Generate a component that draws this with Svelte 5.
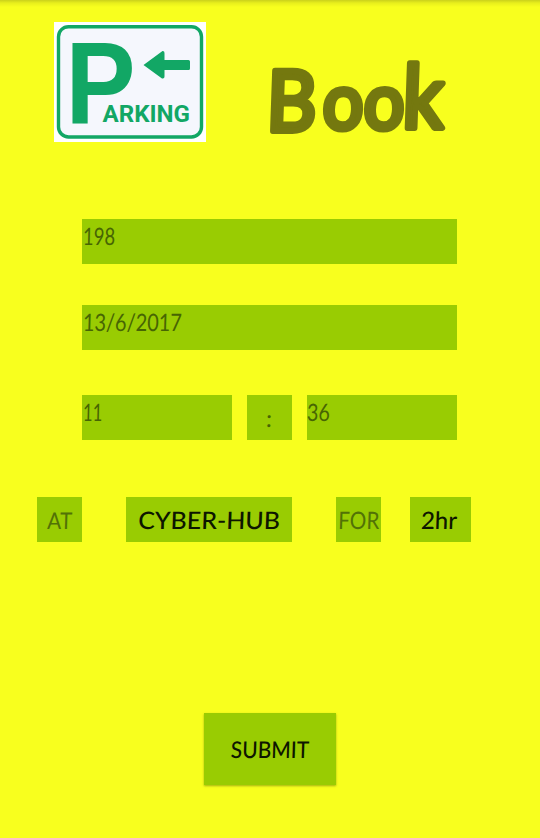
<script>
  let vehicle = '198';
  let date = '13/6/2017';
  let hour = '11';
  let minute = '36';
</script>

<main>
  <header>
    <svg class="logo" viewBox="0 0 152 120" width="152" height="120" aria-label="Parking">
      <rect width="152" height="120" fill="#fff" />
      <rect x="4.5" y="4.7" width="143" height="110.3" rx="10" fill="#f5f7fd" stroke="#12a765" stroke-width="3.4" />
      <text class="big" x="11.5" y="101" textLength="70" lengthAdjust="spacingAndGlyphs">P</text>
      <path d="M89.5 43 L108.5 29 Q110.8 28.6 110.5 31.5 V38 H134.5 Q136 38 136 39.5 V46.5 Q136 48 134.5 48 H110.5 V54.5 Q110.6 57 108 56.5 Z" fill="#12a765" />
      <text class="small" x="48.5" y="100" textLength="87.5" lengthAdjust="spacingAndGlyphs">ARKING</text>
    </svg>
    <h1>
      <svg viewBox="0 0 200 120" width="200" height="120" aria-label="Book">
        <g transform="skewX(-2)">
          <text y="109" transform="scale(.92 1)"><tspan x="10.5" font-size="84">B</tspan><tspan x="71.5" y="107" font-size="78">o</tspan><tspan x="116" y="107" font-size="78">o</tspan><tspan x="158" y="106" font-size="88">k</tspan></text>
        </g>
      </svg>
    </h1>
  </header>

  <div class="field one"><span class="t" style="--s:.77">{vehicle}</span></div>
  <div class="field two"><span class="t" style="--s:.83">{date}</span></div>
  <div class="time">
    <div class="field part"><span class="t" style="--s:.7">{hour}</span></div>
    <div class="field colon"><span class="t">:</span></div>
    <div class="field part right"><span class="t" style="--s:.82">{minute}</span></div>
  </div>

  <div class="place">
    <div class="label at"><span class="t">AT</span></div>
    <button class="site"><span class="t" style="--s:1.04">CYBER-HUB</span></button>
    <div class="label for"><span class="t" style="--s:.86">FOR</span></div>
    <button class="hours"><span class="t">2hr</span></button>
  </div>

  <button class="submit"><span class="t" style="--s:.91">SUBMIT</span></button>
</main>

<style>
  :global(body) { margin: 0; }
  main {
    box-sizing: border-box;
    width: 540px;
    height: 838px;
    padding-top: 22px;
    overflow: hidden;
    display: flex;
    flex-direction: column;
    background: linear-gradient(#cbd11b 0, #e8ef1c 3px, #f8ff1e 7px) #f8ff1e;
    font-family: Lato, "Open Sans", sans-serif;
  }
  header { display: flex; height: 120px; padding-left: 54px; flex: none; }
  .logo { display: block; flex: none; overflow: visible; }
  .logo text { font-weight: 700; fill: #12a765; }
  .big { font-family: "Liberation Sans", sans-serif; font-size: 117px; }
  .small { font-family: Roboto, "Liberation Sans", sans-serif; font-size: 24px; }
  h1 { margin: 0 0 0 54px; }
  h1 svg { display: block; overflow: visible; }
  h1 text {
    font-weight: 400;
    fill: #74780f;
    stroke: #74780f;
    stroke-width: 6px;
    stroke-linejoin: round;
    stroke-linecap: round;
  }
  .t { display: inline-block; transform: scaleX(var(--s, 1)) skewX(-2deg); transform-origin: left center; white-space: nowrap; }
  .field {
    box-sizing: border-box;
    height: 45px;
    flex: none;
    padding: 3px 0 0 1px;
    background: #99cc02;
    color: #476503;
    font-size: 24px;
    line-height: 28px;
  }
  .one, .two { width: 375px; margin-left: 82px; }
  .one { margin-top: 77px; }
  .two { margin-top: 41px; }
  .time { display: flex; gap: 15px; margin: 45px 0 0 82px; }
  .part { width: 150px; }
  .right { padding-left: 0; }
  .colon { width: 45px; padding: 9px 0 0; text-align: center; }
  .place { display: flex; margin: 57px 0 0 37px; height: 45px; flex: none; }
  .label, button {
    box-sizing: border-box;
    display: flex;
    align-items: center;
    justify-content: center;
    padding: 0;
    border: 0;
    border-radius: 0;
    background: #99cc02;
    font-family: inherit;
    font-size: 24px;
    line-height: 28px;
  }
  .label { width: 45px; color: #527206; }
  .label .t, button .t { transform-origin: center; }
  .at .t { font-size: 23px; transform: scaleX(.9) skewX(-2deg); }
  button { color: #0d1600; font-weight: 500; }
  .site { width: 166px; margin-left: 44px; }
  .for { margin-left: 44px; }
  .hours { width: 61px; margin-left: 29px; padding-right: 3px; }
  .submit {
    width: 132px;
    height: 72px;
    margin: 171px 0 0 204px;
    box-shadow: 0 1px 2px rgba(80, 100, 0, .5);
    font-size: 23px;
    flex: none;
  }
</style>
